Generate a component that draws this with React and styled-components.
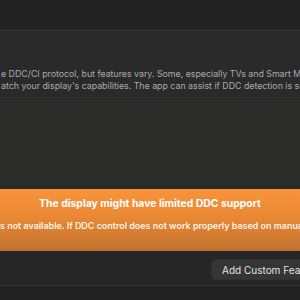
import React from "react";
import styled, { createGlobalStyle } from "styled-components";

const Global = createGlobalStyle`
  html, body { margin: 0; padding: 0; background: #222222; }
  body { font-family: Inter, "Noto Sans", sans-serif; -webkit-font-smoothing: antialiased; }
  #root { width: 300px; height: 300px; overflow: hidden; }
`;

const Page = styled.div`
  width: 300px;
  height: 300px;
  display: flex;
  flex-direction: column;
  overflow: hidden;
  background: #222222;
`;

const TopBar = styled.div`
  height: 30px;
  flex: none;
  background: #232323;
  border-bottom: 1px solid #383838;
`;

const InfoPanel = styled.div`
  height: 67px;
  flex: none;
  background: #2a2a2a;
  border-bottom: 1px solid #323232;
  display: flex;
  flex-direction: column;
  justify-content: flex-end;
  padding-bottom: 5px;
  box-sizing: border-box;
  overflow: hidden;
`;

const InfoLine = styled.div`
  white-space: nowrap;
  font-size: 8.8px;
  line-height: 12px;
  color: #aaaaaa;
  padding-left: 1px;
`;

const Empty = styled.div`
  height: 91px;
  flex: none;
  background: #2b2b29;
`;

const Banner = styled.div`
  height: 62px;
  flex: none;
  background: linear-gradient(180deg, #f8933a 0%, #ea8834 45%, #c17130 100%);
  display: flex;
  flex-direction: column;
  align-items: center;
  padding-top: 7px;
  box-sizing: border-box;
  overflow: hidden;
`;

const BannerTitle = styled.div`
  font-size: 10.4px;
  font-weight: 700;
  color: #ffffff;
  line-height: 15px;
  white-space: nowrap;
`;

const BannerText = styled.div`
  align-self: flex-start;
  margin-top: 8px;
  font-size: 8.95px;
  font-weight: 600;
  color: #fff3e6;
  line-height: 13px;
  white-space: nowrap;
`;

const Footer = styled.div`
  height: 35px;
  flex: none;
  background: #262626;
  border-bottom: 1px solid #333333;
  display: flex;
  justify-content: flex-start;
  padding-left: 212px;
  padding-top: 9px;
  box-sizing: border-box;
`;

const Button = styled.button`
  height: 19px;
  padding: 0 10px;
  border: none;
  border-radius: 5px;
  background: #353535;
  box-shadow: 0 0 0 0.5px #3d3d3d;
  color: #e2e2e2;
  font-family: Inter, "Noto Sans", sans-serif;
  font-size: 10px;
  white-space: nowrap;
  flex: none;
`;

const Bottom = styled.div`
  flex: 1;
  background: #222222;
`;

export default function App() {
  return (
    <Page>
      <Global />
      <TopBar />
      <InfoPanel>
        <InfoLine>e DDC/CI protocol, but features vary. Some, especially TVs and Smart Monitors, may not</InfoLine>
        <InfoLine>atch your display's capabilities. The app can assist if DDC detection is supported.</InfoLine>
      </InfoPanel>
      <Empty />
      <Banner>
        <BannerTitle>The display might have limited DDC support</BannerTitle>
        <BannerText>s not available. If DDC control does not work properly based on manual testing</BannerText>
      </Banner>
      <Footer>
        <Button>Add Custom Feature</Button>
      </Footer>
      <Bottom />
    </Page>
  );
}
